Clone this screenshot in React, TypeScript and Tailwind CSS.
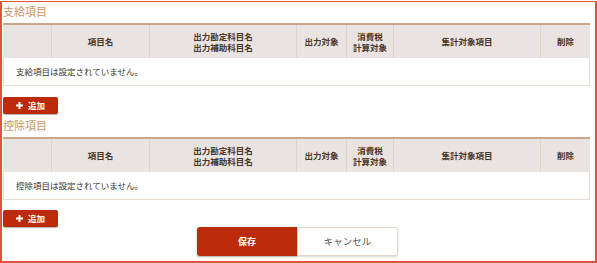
import React from "react";

const font = { fontFamily: '"Noto Sans CJK JP", "Noto Sans", sans-serif' };

function Header() {
  const th =
    "flex items-center justify-center text-center border-r border-[#e2d2c8] last:border-r-0 text-[8.5px] leading-[11px] font-bold text-[#4a3526]";
  return (
    <div className="flex h-[35px] bg-[#e9e3e2] border-t-2 border-[#caa68c]">
      <div className={th + " w-[49px]"}></div>
      <div className={th + " w-[98px]"}>項目名</div>
      <div className={th + " w-[147px]"}>
        出力勘定科目名
        <br />
        出力補助科目名
      </div>
      <div className={th + " w-[50px]"}>出力対象</div>
      <div className={th + " w-[47px]"}>
        消費税
        <br />
        計算対象
      </div>
      <div className={th + " w-[147px]"}>集計対象項目</div>
      <div className={th + " w-[49px]"}>削除</div>
    </div>
  );
}

function Section({ title, empty }: { title: string; empty: string }) {
  return (
    <div>
      <div className="h-[21px] pt-[2px] text-[11px] leading-[14px] text-[#c9946b]">{title}</div>
      <div className="w-[587px]">
        <Header />
        <div className="h-[28px] flex items-center pl-[12px] border-x border-b border-[#e7dbd4] text-[8.5px] text-[#333]">
          {empty}
        </div>
      </div>
    </div>
  );
}

function AddButton() {
  return (
    <button className="w-[55px] h-[17px] bg-[#bb2b09] rounded-[2px] shadow-[0_1px_1px_rgba(0,0,0,0.3)] flex items-center justify-center gap-[5px] text-white text-[8.5px] font-bold">
      <svg width="7" height="7" viewBox="0 0 7 7">
        <rect x="2.5" y="0" width="2" height="7" fill="white" />
        <rect x="0" y="2.5" width="7" height="2" fill="white" />
      </svg>
      <span>追加</span>
    </button>
  );
}

export default function App() {
  return (
    <div className="w-[597px] h-[263px] bg-white" style={font}>
      <div className="w-[597px] h-[262px] mt-px border-2 border-t border-[#e05240] pl-px relative">
        <Section title="支給項目" empty="支給項目は設定されていません。" />
        <div className="mt-[11px] h-[17px]">
          <AddButton />
        </div>
        <div className="mt-[2px]">
          <Section title="控除項目" empty="控除項目は設定されていません。" />
        </div>
        <div className="mt-[10px] h-[17px]">
          <AddButton />
        </div>
        <div className="flex ml-[194px] mt-0">
          <button className="w-[100px] h-[29px] bg-[#bb2b09] rounded-l-[3px] shadow-[0_1px_2px_rgba(0,0,0,0.35)] text-white text-[9px] font-bold">
            保存
          </button>
          <button className="w-[101px] h-[29px] bg-white border border-[#e3d3ca] rounded-r-[3px] shadow-[0_1px_2px_rgba(0,0,0,0.15)] text-[#555] text-[9.5px]">
            キャンセル
          </button>
        </div>
      </div>
    </div>
  );
}
